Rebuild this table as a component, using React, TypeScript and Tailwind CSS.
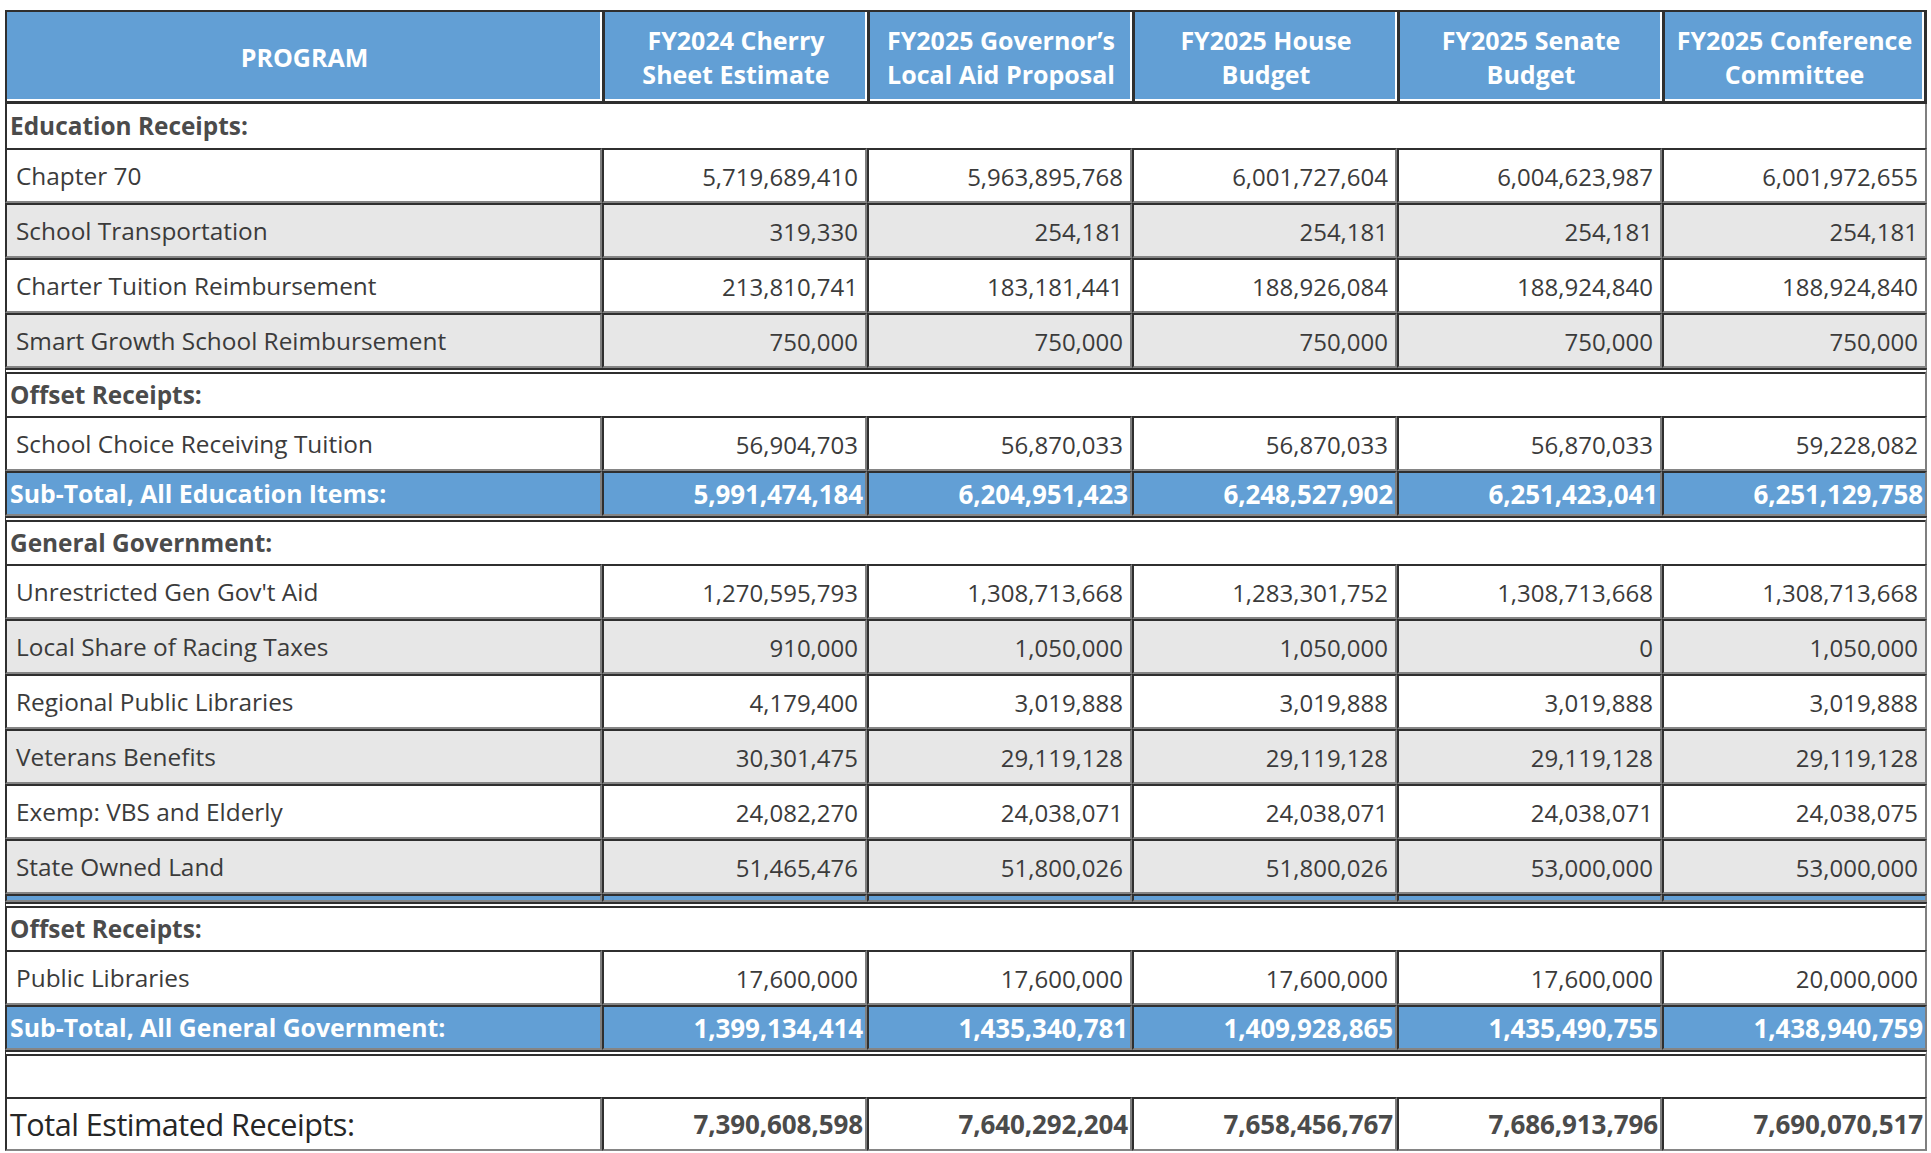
import React from 'react';

type Row =
  | { kind: 'section'; label: string; first?: boolean }
  | { kind: 'item'; label: string; values: string[]; shade?: boolean }
  | { kind: 'subtotal'; label: string; values: string[] }
  | { kind: 'bar' }
  | { kind: 'blank' }
  | { kind: 'total'; label: string; values: string[] };

const headers = [
  ['PROGRAM'],
  ['FY2024 Cherry', 'Sheet Estimate'],
  ['FY2025 Governor’s', 'Local Aid Proposal'],
  ['FY2025 House', 'Budget'],
  ['FY2025 Senate', 'Budget'],
  ['FY2025 Conference', 'Committee'],
];

const rows: Row[] = [
  { kind: 'section', label: 'Education Receipts:', first: true },
  { kind: 'item', label: 'Chapter 70', values: ['5,719,689,410', '5,963,895,768', '6,001,727,604', '6,004,623,987', '6,001,972,655'] },
  { kind: 'item', label: 'School Transportation', shade: true, values: ['319,330', '254,181', '254,181', '254,181', '254,181'] },
  { kind: 'item', label: 'Charter Tuition Reimbursement', values: ['213,810,741', '183,181,441', '188,926,084', '188,924,840', '188,924,840'] },
  { kind: 'item', label: 'Smart Growth School Reimbursement', shade: true, values: ['750,000', '750,000', '750,000', '750,000', '750,000'] },
  { kind: 'section', label: 'Offset Receipts:' },
  { kind: 'item', label: 'School Choice Receiving Tuition', values: ['56,904,703', '56,870,033', '56,870,033', '56,870,033', '59,228,082'] },
  { kind: 'subtotal', label: 'Sub-Total, All Education Items:', values: ['5,991,474,184', '6,204,951,423', '6,248,527,902', '6,251,423,041', '6,251,129,758'] },
  { kind: 'section', label: 'General Government:' },
  { kind: 'item', label: "Unrestricted Gen Gov't Aid", values: ['1,270,595,793', '1,308,713,668', '1,283,301,752', '1,308,713,668', '1,308,713,668'] },
  { kind: 'item', label: 'Local Share of Racing Taxes', shade: true, values: ['910,000', '1,050,000', '1,050,000', '0', '1,050,000'] },
  { kind: 'item', label: 'Regional Public Libraries', values: ['4,179,400', '3,019,888', '3,019,888', '3,019,888', '3,019,888'] },
  { kind: 'item', label: 'Veterans Benefits', shade: true, values: ['30,301,475', '29,119,128', '29,119,128', '29,119,128', '29,119,128'] },
  { kind: 'item', label: 'Exemp: VBS and Elderly', values: ['24,082,270', '24,038,071', '24,038,071', '24,038,071', '24,038,075'] },
  { kind: 'item', label: 'State Owned Land', shade: true, values: ['51,465,476', '51,800,026', '51,800,026', '53,000,000', '53,000,000'] },
  { kind: 'bar' },
  { kind: 'section', label: 'Offset Receipts:' },
  { kind: 'item', label: 'Public Libraries', values: ['17,600,000', '17,600,000', '17,600,000', '17,600,000', '20,000,000'] },
  { kind: 'subtotal', label: 'Sub-Total, All General Government:', values: ['1,399,134,414', '1,435,340,781', '1,409,928,865', '1,435,490,755', '1,438,940,759'] },
  { kind: 'blank' },
  { kind: 'total', label: 'Total Estimated Receipts:', values: ['7,390,608,598', '7,640,292,204', '7,658,456,767', '7,686,913,796', '7,690,070,517'] },
];

// side borders shared by every body cell: dark on the left, grey on the right
const side = 'border-l-2 border-l-[#2f2f2f] border-r-2 border-r-[#7f7f7f]';
const rowEdge = 'border-t-2 border-t-[#2f2f2f] border-b-2 border-b-[#858585]';

function BodyRow({ row }: { row: Row }) {
  if (row.kind === 'section') {
    return (
      <tr>
        <td
          colSpan={6}
          className={`${side} ${row.first ? 'h-[44px]' : 'h-[48px] border-t-[6px] border-double border-t-[#2f2f2f]'} pl-[3px] pt-[1px] text-left text-[24.4px] font-bold text-[#4b4b4b]`}
        >
          {row.label}
        </td>
      </tr>
    );
  }
  if (row.kind === 'bar') {
    return (
      <tr>
        {Array.from({ length: 6 }).map((_, i) => (
          <td key={i} className={`${side} ${rowEdge} h-[8px] bg-[#629fd5] p-0`} />
        ))}
      </tr>
    );
  }
  if (row.kind === 'blank') {
    return (
      <tr>
        <td colSpan={6} className={`${side} h-[47px] border-t-[6px] border-double border-t-[#2f2f2f]`} />
      </tr>
    );
  }
  if (row.kind === 'subtotal') {
    return (
      <tr className="bg-[#629fd5] font-bold text-white">
        <td className={`${side} ${rowEdge} h-[45px] pl-[3px] pt-[1px] text-left text-[24.8px]`}>{row.label}</td>
        {row.values.map((v, i) => (
          <td key={i} className={`${side} ${rowEdge} pr-[2px] pt-[1px] text-right text-[26px] tracking-[-0.1px]`}>{v}</td>
        ))}
      </tr>
    );
  }
  if (row.kind === 'total') {
    return (
      <tr>
        <td className={`${side} ${rowEdge} h-[54px] pl-[3px] pt-[1px] text-left text-[30.6px] tracking-[-0.5px] text-[#262626]`}>{row.label}</td>
        {row.values.map((v, i) => (
          <td key={i} className={`${side} ${rowEdge} pr-[2px] pt-[1px] text-right text-[26px] tracking-[-0.1px] font-bold text-[#4b4b4b]`}>{v}</td>
        ))}
      </tr>
    );
  }
  return (
    <tr className={row.shade ? 'bg-[#e7e7e7]' : 'bg-white'}>
      <td className={`${side} ${rowEdge} h-[55px] pl-[9px] pt-[2px] text-left text-[24.4px]`}>{row.label}</td>
      {row.values.map((v, i) => (
        <td key={i} className={`${side} ${rowEdge} pr-[7px] pt-[2px] text-right`}>{v}</td>
      ))}
    </tr>
  );
}

export default function App() {
  return (
    <div className="h-[1153px] overflow-hidden bg-white pl-[5px] pt-[10px] font-['Open_Sans',sans-serif] text-[24px] text-[#3b3b3b]">
      <table className="w-[1922px] table-fixed border-separate border-spacing-0">
        <colgroup>
          <col className="w-[597px]" />
          <col className="w-[265px]" />
          <col className="w-[265px]" />
          <col className="w-[265px]" />
          <col className="w-[265px]" />
          <col className="w-[265px]" />
        </colgroup>
        <thead>
          <tr>
            {headers.map((lines, i) => (
              <th
                key={i}
                className={`h-[94px] border-t-2 border-b-[3px] ${i === 0 ? 'border-l-2' : 'border-l-[3px]'} ${i === 5 ? 'border-r-[3px]' : ''} border-[#2f2f2f] bg-[#629fd5] p-0 text-center text-[25px] font-bold leading-[34px] text-white shadow-[inset_-2px_-2px_0_#ffffff]`}
              >
                {lines.map((l) => (
                  <div key={l}>{l}</div>
                ))}
              </th>
            ))}
          </tr>
        </thead>
        <tbody>
          {rows.map((r, i) => (
            <BodyRow key={i} row={r} />
          ))}
        </tbody>
      </table>
    </div>
  );
}
